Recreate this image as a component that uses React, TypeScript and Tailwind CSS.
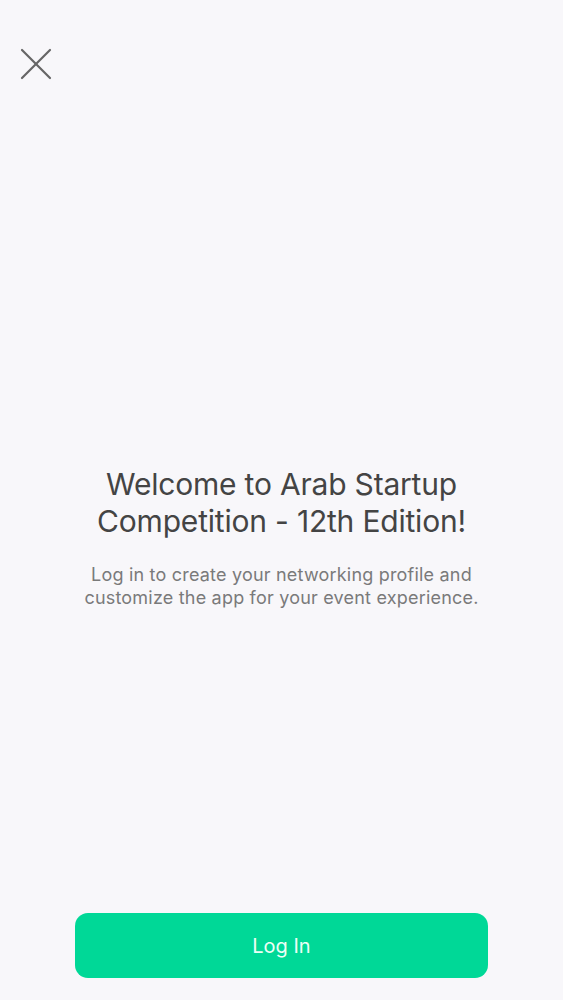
import React from 'react';

const CloseIcon: React.FC = () => (
  <svg width="32" height="32" viewBox="0 0 32 32" fill="none" stroke="#666666" strokeWidth="2.2" strokeLinecap="round">
    <path d="M2 2 L30 30" />
    <path d="M30 2 L2 30" />
  </svg>
);

export default function App() {
  return (
    <div
      className="w-[563px] h-[1000px] bg-[#f8f7fa] flex flex-col"
      style={{ fontFamily: 'Inter, "Liberation Sans", sans-serif' }}
    >
      <div className="h-[100px] shrink-0 pl-[20px] pt-[48px]">
        <button className="block" aria-label="Close">
          <CloseIcon />
        </button>
      </div>

      <div className="flex-1 flex flex-col items-center justify-center pt-[61px] px-4 text-center">
        <h1 className="text-[30px] leading-[37px] text-[#444444] tracking-[-0.2px]">
          Welcome to Arab Startup
          <br />
          Competition - 12th Edition!
        </h1>
        <p className="mt-[23px] text-[18px] leading-[23px] text-[#7a7a7a] tracking-[0.2px]">
          Log in to create your networking profile and
          <br />
          customize the app for your event experience.
        </p>
      </div>

      <div className="shrink-0 px-[75px] pb-[22px]">
        <button className="w-full h-[65px] rounded-[13px] bg-[#00d897] text-[#ecfff6] text-[20px]">
          Log In
        </button>
      </div>
    </div>
  );
}
